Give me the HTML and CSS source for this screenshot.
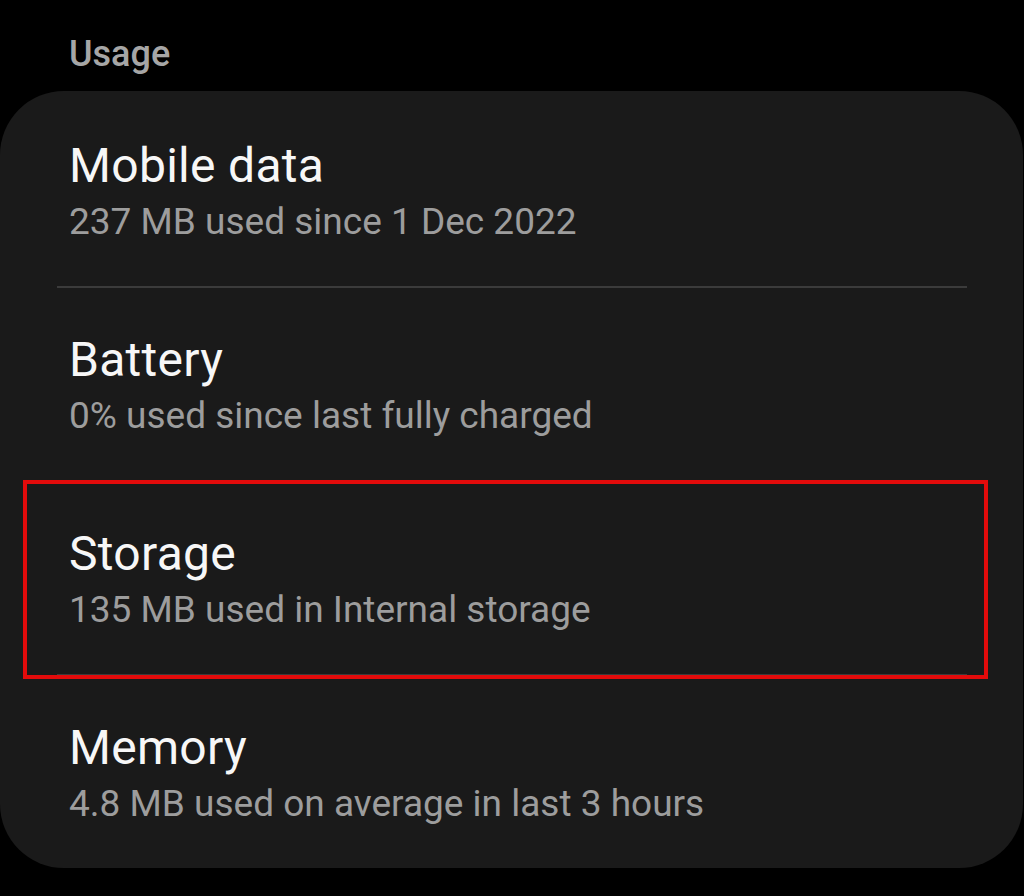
FILE: index.html
```html
<!DOCTYPE html>
<html lang="en">
<head>
    <meta charset="UTF-8">
    <meta name="viewport" content="width=device-width, initial-scale=1.0">
    <title>Usage</title>
    <link rel="stylesheet" href="styles.css">
</head>
<body>

<h3 class="section-title">Usage</h3>

<div class="card">
    <div class="row">
        <div class="row-title">Mobile data</div>
        <div class="row-sub">237 MB used since 1 Dec 2022</div>
    </div>
    <div class="divider"></div>
    <div class="row">
        <div class="row-title">Battery</div>
        <div class="row-sub">0% used since last fully charged</div>
    </div>
    <div class="divider"></div>
    <div class="row highlighted">
        <div class="row-title">Storage</div>
        <div class="row-sub">135 MB used in Internal storage</div>
        <!-- red annotation box -->
        <div class="mark"></div>
    </div>
    <div class="divider"></div>
    <div class="row">
        <div class="row-title">Memory</div>
        <div class="row-sub">4.8 MB used on average in last 3 hours</div>
    </div>
</div>

</body>
</html>
```

FILE: styles.css
```css
body {
    margin: 0;
    background: #000;
    font-family: Roboto, "Noto Sans", Arial, sans-serif;
    min-height: 896px;
}
.section-title {
    margin: 0;
    padding: 32px 0 0 69px;
    font-size: 36px;
    line-height: 44px;
    font-weight: 500;
    color: #a6a6a6;
}
.card {
    margin: 15px 1px 0 0;
    padding-top: 3px;
    background: #1a1a1a;
    border-radius: 64px;
}
.row {
    position: relative;
    padding: 44px 0 36px 69px;
}
.row-title {
    font-size: 48px;
    line-height: 56px;
    letter-spacing: 0.3px;
    color: #f7f7f7;
}
.row-sub {
    font-size: 37px;
    line-height: 56px;
    color: #9d9d9d;
}
.divider {
    height: 2px;
    margin: 0 56px 0 57px;
    background: #3b3b3b;
}
.mark {
    position: absolute;
    left: 23px;
    top: -2px;
    width: 957px;
    height: 191px;
    border: 4px solid #e30b0b;
}
```
